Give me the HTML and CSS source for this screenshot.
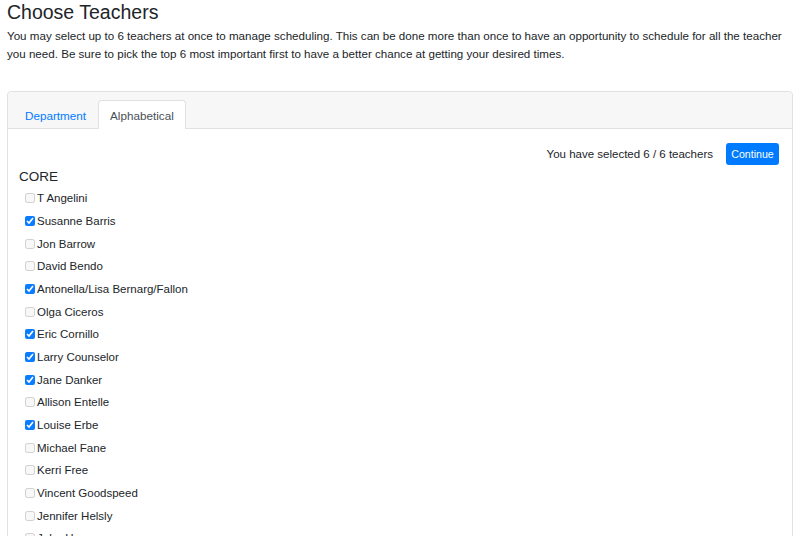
FILE: index.html
```html
<!DOCTYPE html>
<html>
<head>
<meta charset="utf-8">
<link rel="stylesheet" href="styles.css">
</head>
<body>
<div class="page">
  <h1 class="title">Choose Teachers</h1>
  <p class="intro">You may select up to 6 teachers at once to manage scheduling. This can be done more than once to have an opportunity to schedule for all the teacher you need. Be sure to pick the top 6 most important first to have a better chance at getting your desired times.</p>
  <div class="card">
    <div class="card-header">
      <ul class="tabs">
        <li class="tab"><a class="tab-link">Department</a></li>
        <li class="tab active"><a class="tab-link">Alphabetical</a></li>
      </ul>
    </div>
    <div class="card-body">
      <div class="toolbar">
        <span class="count">You have selected 6 / 6 teachers</span>
        <button class="btn">Continue</button>
      </div>
      <h2 class="group">CORE</h2>
      <div class="list">
        <label class="row"><input type="checkbox" disabled><span>T Angelini</span></label>
        <label class="row"><input type="checkbox" checked><span>Susanne Barris</span></label>
        <label class="row"><input type="checkbox" disabled><span>Jon Barrow</span></label>
        <label class="row"><input type="checkbox" disabled><span>David Bendo</span></label>
        <label class="row"><input type="checkbox" checked><span>Antonella/Lisa Bernarg/Fallon</span></label>
        <label class="row"><input type="checkbox" disabled><span>Olga Ciceros</span></label>
        <label class="row"><input type="checkbox" checked><span>Eric Cornillo</span></label>
        <label class="row"><input type="checkbox" checked><span>Larry Counselor</span></label>
        <label class="row"><input type="checkbox" checked><span>Jane Danker</span></label>
        <label class="row"><input type="checkbox" disabled><span>Allison Entelle</span></label>
        <label class="row"><input type="checkbox" checked><span>Louise Erbe</span></label>
        <label class="row"><input type="checkbox" disabled><span>Michael Fane</span></label>
        <label class="row"><input type="checkbox" disabled><span>Kerri Free</span></label>
        <label class="row"><input type="checkbox" disabled><span>Vincent Goodspeed</span></label>
        <label class="row"><input type="checkbox" disabled><span>Jennifer Helsly</span></label>
        <label class="row"><input type="checkbox" disabled><span>John Hoyer</span></label>
      </div>
    </div>
  </div>
</div>
</body>
</html>
```

FILE: styles.css
```css
html, body {
  margin: 0;
  padding: 0;
  background: #ffffff;
  overflow: hidden;
}
body {
  font-family: "Liberation Sans", Arial, sans-serif;
  color: #212529;
}
.page {
  padding: 0 7px;
}
.title {
  margin: 0;
  font-size: 19.5px;
  line-height: 24px;
  font-weight: 500;
}
.intro {
  margin: 3px 0 0;
  font-size: 11.6px;
  line-height: 18px;
}
.card {
  margin-top: 28px;
  border: 1px solid #e1e1e1;
  border-radius: 4px;
}
.card-header {
  background: #f7f7f7;
  border-bottom: 1px solid #e1e1e1;
  padding: 8px 5px 0;
  border-radius: 4px 4px 0 0;
}
.tabs {
  list-style: none;
  margin: 0 0 -1px;
  padding: 0;
  display: flex;
}
.tab-link {
  display: block;
  padding: 0 11px;
  height: 28px;
  line-height: 29px;
  font-size: 11.7px;
  color: #007bff;
  border: 1px solid transparent;
  border-bottom: none;
  border-radius: 4px 4px 0 0;
}
.tab.active .tab-link {
  color: #495057;
  background: #ffffff;
  border-color: #e1e1e1;
}
.card-body {
  padding: 14px 13px 0 11px;
}
.toolbar {
  display: flex;
  justify-content: flex-end;
  align-items: center;
  gap: 13px;
}
.count {
  font-size: 11.5px;
}
.btn {
  font-family: inherit;
  font-size: 10.6px;
  height: 22px;
  width: 53px;
  padding: 0;
  color: #ffffff;
  background: #007bff;
  border: none;
  border-radius: 3px;
}
.group {
  margin: 2px 0 0;
  font-size: 13.5px;
  line-height: 20px;
  font-weight: 500;
}
.list {
  padding: 0 0 0 6px;
}
.row {
  display: flex;
  align-items: center;
  gap: 2px;
  height: 22.67px;
  font-size: 11.5px;
}
.row input {
  margin: 0;
  width: 10px;
  height: 10px;
  accent-color: #0a7cff;
}
```
